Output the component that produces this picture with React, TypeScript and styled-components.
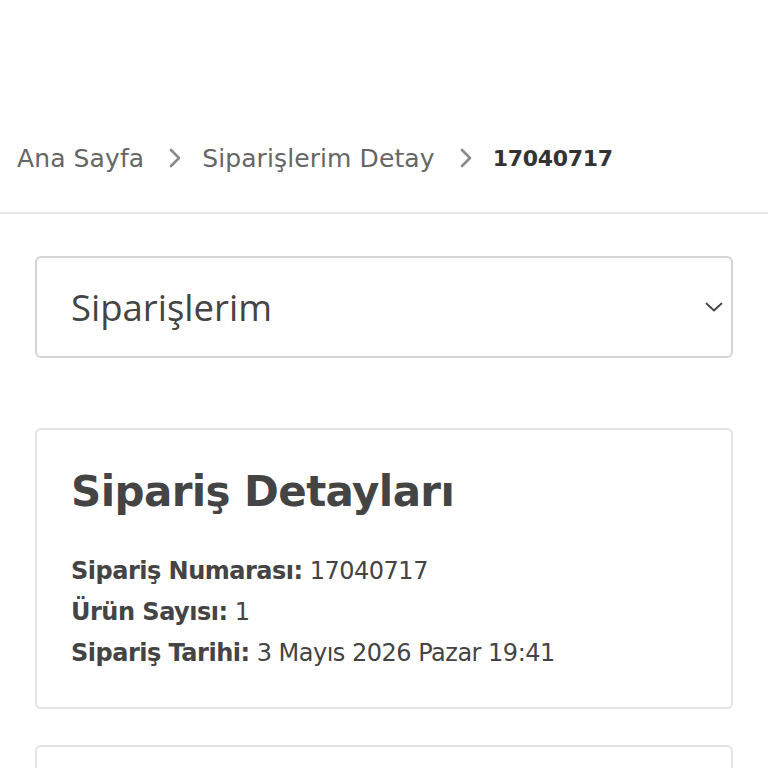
import styled, { createGlobalStyle } from "styled-components";

const GlobalStyle = createGlobalStyle`
  body {
    margin: 0;
    background: #fff;
    font-family: "DejaVu Sans", "Noto Sans", sans-serif;
    color: #444;
  }
`;

const crumbs = ["Ana Sayfa", "Siparişlerim Detay"];

const ChevronRight = () => (
  <svg width="14" height="22" viewBox="0 0 14 22" fill="none">
    <path d="M3 3l8 8-8 8" stroke="#8a8a8a" strokeWidth="2.6" strokeLinecap="round" strokeLinejoin="round" />
  </svg>
);

const ChevronDown = () => (
  <svg width="18" height="10" viewBox="0 0 18 10" fill="none">
    <path d="M1.5 1.5l7.5 7 7.5-7" stroke="#444" strokeWidth="1.8" strokeLinecap="round" strokeLinejoin="round" />
  </svg>
);

export default function App() {
  return (
    <>
      <GlobalStyle />
      <Page>
        <TopSpace />
        <Breadcrumb>
          {crumbs.map((c) => (
            <Crumb key={c}>
              <CrumbLink>{c}</CrumbLink>
              <ChevronRight />
            </Crumb>
          ))}
          <CrumbCurrent>17040717</CrumbCurrent>
        </Breadcrumb>
        <Content>
          <Select>
            <SelectLabel>Siparişlerim</SelectLabel>
            <ChevronDown />
          </Select>
          <Card>
            <CardTitle>Sipariş Detayları</CardTitle>
            <InfoList>
              <InfoRow>
                <b>Sipariş Numarası:</b> 17040717
              </InfoRow>
              <InfoRow>
                <b>Ürün Sayısı:</b> 1
              </InfoRow>
              <InfoRow>
                <b>Sipariş Tarihi:</b> 3 Mayıs 2026 Pazar 19:41
              </InfoRow>
            </InfoList>
          </Card>
          <Card $gap={36} />
        </Content>
      </Page>
    </>
  );
}

const Page = styled.div`
  width: 768px;
  height: 768px;
  overflow: hidden;
`;

const TopSpace = styled.div`
  height: 126px;
`;

const Breadcrumb = styled.nav`
  display: flex;
  align-items: center;
  gap: 20px;
  padding: 0 17px;
  height: 64px;
  padding-bottom: 22px;
  border-bottom: 2px solid #e6e6e6;
`;

const Crumb = styled.span`
  display: flex;
  align-items: center;
  gap: 24px;
`;

const CrumbLink = styled.span`
  font-size: 25px;
  color: #666;
  letter-spacing: 0.1px;
`;

const CrumbCurrent = styled.span`
  font-size: 22px;
  font-weight: 700;
  color: #333;
  letter-spacing: -0.3px;
`;

const Content = styled.main`
  padding: 42px 35px 0;
  display: flex;
  flex-direction: column;
`;

const Select = styled.div`
  height: 98px;
  border: 2px solid #d4d4d4;
  border-radius: 6px;
  display: flex;
  align-items: center;
  justify-content: space-between;
  padding: 0 8px 0 34px;
`;

const SelectLabel = styled.span`
  font-family: "Open Sans", "Noto Sans", sans-serif;
  font-size: 36.5px;
  color: #444;
`;

const Card = styled.section<{ $gap?: number }>`
  margin-top: ${(p) => p.$gap ?? 70}px;
  border: 2px solid #e3e3e3;
  border-radius: 6px;
  padding: 34px 34px 33px;
  min-height: 200px;
`;

const CardTitle = styled.h1`
  margin: 0;
  font-size: 42px;
  font-weight: 700;
  color: #444;
  letter-spacing: -0.6px;
  line-height: 56px;
`;

const InfoList = styled.div`
  margin-top: 31px;
  display: flex;
  flex-direction: column;
`;

const InfoRow = styled.div`
  font-size: 24px;
  line-height: 41px;
  color: #444;
  letter-spacing: -0.5px;

  b {
    font-weight: 700;
  }
`;
